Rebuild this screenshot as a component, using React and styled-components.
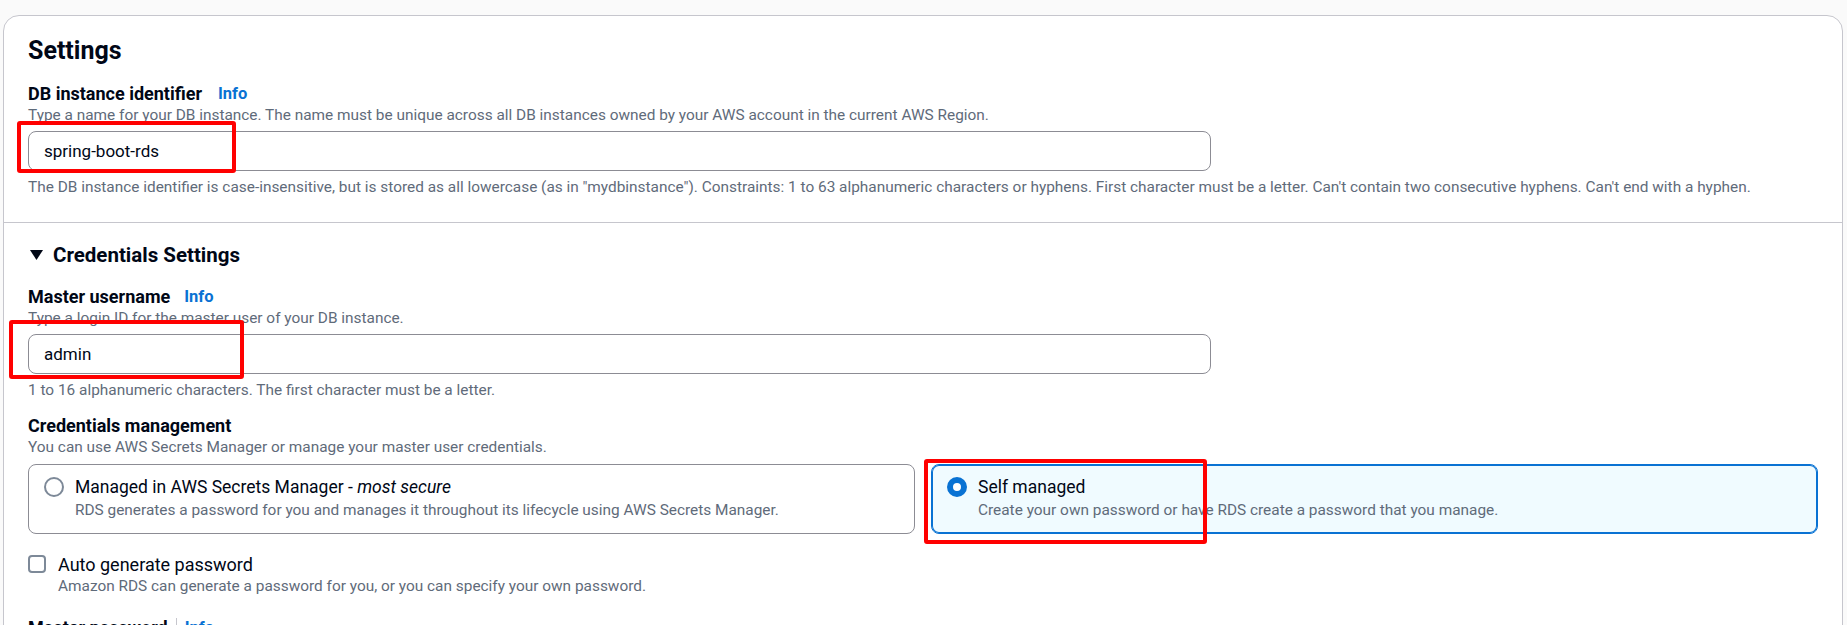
import React from "react";
import styled, { createGlobalStyle } from "styled-components";

const GlobalStyle = createGlobalStyle`
  html, body {
    margin: 0;
    padding: 0;
    background: #fafafa;
  }
  body {
    font-family: Roboto, "Open Sans", sans-serif;
    color: #000716;
  }
  * {
    box-sizing: border-box;
  }
`;

const App = () => (
  <Page>
    <GlobalStyle />
    <Card>
      <Section $top={20} $bottom={25} $divided>
        <Title>Settings</Title>
        <Field $gap={16}>
          <LabelRow $gap={16}>
            DB instance identifier <InfoLink>Info</InfoLink>
          </LabelRow>
          <Description>
            Type a name for your DB instance. The name must be unique across all DB instances owned by
            your AWS account in the current AWS Region.
          </Description>
          <TextInput defaultValue="spring-boot-rds" />
          <Constraint>
            The DB instance identifier is case-insensitive, but is stored as all lowercase (as in
            "mydbinstance"). Constraints: 1 to 63 alphanumeric characters or hyphens. First character
            must be a letter. Can't contain two consecutive hyphens. Can't end with a hyphen.
          </Constraint>
        </Field>
      </Section>

      <Section $top={19} $bottom={0}>
        <ExpandHeading>
          <Caret width="13" height="10" viewBox="0 0 13 10">
            <path d="M0 0 H13 L6.5 10 Z" fill="#000716" />
          </Caret>
          Credentials Settings
        </ExpandHeading>

        <Field $gap={17}>
          <LabelRow>
            Master username <InfoLink>Info</InfoLink>
          </LabelRow>
          <Description>Type a login ID for the master user of your DB instance.</Description>
          <TextInput defaultValue="admin" />
          <Constraint>1 to 16 alphanumeric characters. The first character must be a letter.</Constraint>
        </Field>

        <Field $gap={14}>
          <LabelRow>Credentials management</LabelRow>
          <Description>You can use AWS Secrets Manager or manage your master user credentials.</Description>
          <TileGrid>
            <Tile>
              <Radio />
              <TileText>
                <TileTitle>
                  Managed in AWS Secrets Manager - <em>most secure</em>
                </TileTitle>
                <TileDescription>
                  RDS generates a password for you and manages it throughout its lifecycle using AWS
                  Secrets Manager.
                </TileDescription>
              </TileText>
            </Tile>
            <Tile $selected>
              <Radio $checked />
              <TileText>
                <TileTitle>Self managed</TileTitle>
                <TileDescription>
                  Create your own password or have RDS create a password that you manage.
                </TileDescription>
              </TileText>
            </Tile>
          </TileGrid>
        </Field>

        <CheckRow>
          <CheckBox />
          <TileText>
            <CheckLabel>Auto generate password</CheckLabel>
            <Description>
              Amazon RDS can generate a password for you, or you can specify your own password.
            </Description>
          </TileText>
        </CheckRow>

        <Field $gap={20}>
          <LabelRow>
            Master password <Separator /> <InfoLink>Info</InfoLink>
          </LabelRow>
        </Field>
      </Section>
    </Card>

    <Highlight $x={17} $y={121} $w={219} $h={52} />
    <Highlight $x={9} $y={320} $w={235} $h={59} />
    <Highlight $x={924} $y={459} $w={283} $h={85} />
  </Page>
);

const Page = styled.div`
  position: relative;
  width: 1847px;
  height: 625px;
  overflow: hidden;
  padding: 15px 4px 0 3px;
`;

const Card = styled.div`
  background: #ffffff;
  border: 1px solid #c6c6cd;
  border-radius: 16px;
  min-height: 700px;
`;

const Section = styled.section`
  padding: ${(p) => p.$top}px 24px ${(p) => p.$bottom}px;
  border-bottom: ${(p) => (p.$divided ? "1px solid #c6c6cd" : "none")};
`;

const Title = styled.h2`
  margin: 0;
  font-size: 25px;
  line-height: 30px;
  font-weight: 700;
`;

const ExpandHeading = styled.h3`
  margin: 0;
  display: flex;
  align-items: center;
  gap: 10px;
  font-size: 20.5px;
  line-height: 26px;
  font-weight: 700;
`;

const Caret = styled.svg`
  margin-left: 2px;
  flex: none;
`;

const Field = styled.div`
  margin-top: ${(p) => p.$gap}px;
`;

const LabelRow = styled.div`
  display: flex;
  align-items: center;
  gap: ${(p) => p.$gap ?? 14}px;
  font-size: 18px;
  line-height: 23px;
  font-weight: 700;
`;

const InfoLink = styled.a`
  color: #0972d3;
  font-size: 16.5px;
  font-weight: 700;
  text-decoration: none;
  cursor: pointer;
`;

const Separator = styled.span`
  width: 1px;
  height: 19px;
  background: #c6c6cd;
  margin: 0 -6px;
`;

const Description = styled.div`
  font-size: 15.4px;
  line-height: 20px;
  font-weight: 400;
  color: #5f6b7a;
`;

const TextInput = styled.input`
  display: block;
  width: 1183px;
  height: 40px;
  margin-top: 6px;
  padding: 0 15px;
  border: 1px solid #8c8c94;
  border-radius: 8px;
  background: #ffffff;
  font-family: Roboto, "Open Sans", sans-serif;
  font-size: 17px;
  color: #000716;
  outline: none;
`;

const Constraint = styled(Description)`
  margin-top: 6px;
`;

const TileGrid = styled.div`
  display: grid;
  grid-template-columns: 1fr 1fr;
  gap: 16px;
  margin-top: 7px;
`;

const Tile = styled.div`
  display: flex;
  align-items: flex-start;
  gap: 11px;
  height: 70px;
  padding: 11px 16px 13px 15px;
  border: 1px solid ${(p) => (p.$selected ? "#0972d3" : "#8c8c94")};
  box-shadow: ${(p) => (p.$selected ? "inset 0 0 0 1px #0972d3" : "none")};
  background: ${(p) => (p.$selected ? "#f0fbff" : "#ffffff")};
  border-radius: 8px;
`;

const Radio = styled.span`
  flex: none;
  width: 20px;
  height: 20px;
  margin-top: 1px;
  border-radius: 50%;
  background: #ffffff;
  border: ${(p) => (p.$checked ? "6px solid #0972d3" : "2px solid #7d8998")};
`;

const TileText = styled.div`
  display: flex;
  flex-direction: column;
`;

const TileTitle = styled.div`
  font-size: 17.5px;
  line-height: 22px;

  em {
    font-style: italic;
  }
`;

const TileDescription = styled(Description)`
  margin-top: 2px;
`;

const CheckRow = styled.div`
  display: flex;
  align-items: flex-start;
  gap: 12px;
  margin-top: 19px;
`;

const CheckBox = styled.span`
  flex: none;
  width: 18px;
  height: 18px;
  margin-top: 2px;
  border: 2px solid #7d8998;
  border-radius: 4px;
  background: #ffffff;
`;

const CheckLabel = styled.div`
  font-size: 18px;
  line-height: 23px;
`;

const Highlight = styled.div`
  position: absolute;
  left: ${(p) => p.$x}px;
  top: ${(p) => p.$y}px;
  width: ${(p) => p.$w}px;
  height: ${(p) => p.$h}px;
  border: 4px solid #ff0000;
  border-radius: 3px;
  pointer-events: none;
`;

export default App;
